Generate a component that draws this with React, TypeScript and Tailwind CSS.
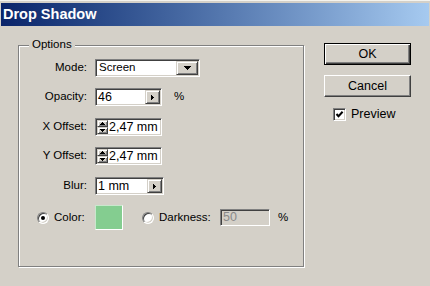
import React from "react";

const sunken =
  "border border-t-[#808080] border-l-[#808080] border-r-white border-b-white shadow-[inset_1px_1px_0_#404040,inset_-1px_-1px_0_#d4d0c8]";
const raisedSmall =
  "bg-[#d4d0c8] border border-t-[#d4d0c8] border-l-[#d4d0c8] border-r-[#404040] border-b-[#404040] shadow-[inset_1px_1px_0_#fff,inset_-1px_-1px_0_#808080]";

function DownTri() {
  return (
    <svg width="7" height="4" viewBox="0 0 7 4" shapeRendering="crispEdges">
      <polygon points="0,0 7,0 3.5,4" fill="#000" />
    </svg>
  );
}
function RightTri() {
  return (
    <svg width="3" height="5" viewBox="0 0 3 5" shapeRendering="crispEdges">
      <polygon points="0,0 3,2.5 0,5" fill="#000" />
    </svg>
  );
}
function UpSmall() {
  return (
    <svg width="5" height="3" viewBox="0 0 5 3" shapeRendering="crispEdges">
      <polygon points="2.5,0 5,3 0,3" fill="#000" />
    </svg>
  );
}
function DownSmall() {
  return (
    <svg width="5" height="3" viewBox="0 0 5 3" shapeRendering="crispEdges">
      <polygon points="0,0 5,0 2.5,3" fill="#000" />
    </svg>
  );
}

function Label({ children }: { children: React.ReactNode }) {
  return <div className="w-[68px] text-right leading-none">{children}</div>;
}

function SpinField({ value }: { value: string }) {
  return (
    <div className={`${sunken} ml-[8px] w-[67px] h-[18px] p-[1px] bg-white flex`}>
      <div className="w-[11px] h-full flex flex-col">
        <div className={`${raisedSmall} h-[7px] flex items-center justify-center`}>
          <UpSmall />
        </div>
        <div className={`${raisedSmall} h-[7px] flex items-center justify-center`}>
          <DownSmall />
        </div>
      </div>
      <div className="flex-1 pl-[1px] flex items-center text-[12.5px] leading-none">{value}</div>
    </div>
  );
}

function Radio({ checked }: { checked?: boolean }) {
  return (
    <div className="w-[12px] h-[12px] rounded-full border border-t-[#808080] border-l-[#808080] border-r-white border-b-white bg-white shadow-[inset_1px_1px_0_#404040,inset_-1px_-1px_0_#d4d0c8] flex items-center justify-center">
      {checked && <div className="w-[4px] h-[4px] rounded-full bg-black" />}
    </div>
  );
}

export default function App() {
  return (
    <div className="w-[430px] h-[286px] bg-[#d4d0c8] border-t border-t-[#f4f3ee] font-['Liberation_Sans',Arial,sans-serif] text-[11.5px] text-black overflow-hidden">
      <div className="mt-[2px] mx-[1px] h-[23px] bg-linear-to-r from-[#0a246a] to-[#a6caf0] flex items-center pl-[2px]">
        <span className="text-white font-bold text-[14.5px] leading-none">Drop Shadow</span>
      </div>

      <div className="flex items-start">
        {/* Options group */}
        <div className="relative ml-[18px] mt-[19px] w-[286px] h-[222px] border border-[#808080] shadow-[1px_1px_0_#fff,inset_1px_1px_0_#fff]">
          <span className="absolute -top-[7px] left-[10px] px-[3px] bg-[#d4d0c8] leading-none">Options</span>

          <div className="flex flex-col pt-[13px]">
            {/* Mode */}
            <div className="flex items-center h-[18px]">
              <Label>Mode:</Label>
              <div className={`${sunken} ml-[8px] w-[105px] h-[18px] p-[1px] bg-white flex`}>
                <div className="flex-1 pl-[2px] flex items-center leading-none">Screen</div>
                <div className={`${raisedSmall} w-[22px] h-full flex items-center justify-center`}>
                  <DownTri />
                </div>
              </div>
            </div>

            {/* Opacity */}
            <div className="flex items-center h-[18px] mt-[11px]">
              <Label>Opacity:</Label>
              <div className={`${sunken} ml-[8px] w-[67px] h-[18px] p-[1px] bg-white flex`}>
                <div className="flex-1 pl-[1px] flex items-center text-[12.5px] leading-none">46</div>
                <div className={`${raisedSmall} w-[15px] h-full flex items-center justify-center`}>
                  <RightTri />
                </div>
              </div>
              <span className="ml-[12px] leading-none">%</span>
            </div>

            {/* X Offset */}
            <div className="flex items-center h-[18px] mt-[12px]">
              <Label>X Offset:</Label>
              <SpinField value="2,47 mm" />
            </div>

            {/* Y Offset */}
            <div className="flex items-center h-[18px] mt-[11px]">
              <Label>Y Offset:</Label>
              <SpinField value="2,47 mm" />
            </div>

            {/* Blur */}
            <div className="flex items-center h-[18px] mt-[12px]">
              <Label>Blur:</Label>
              <div className={`${sunken} ml-[8px] w-[69px] h-[18px] p-[1px] bg-white flex`}>
                <div className="flex-1 pl-[1px] flex items-center text-[12.5px] leading-none">1 mm</div>
                <div className={`${raisedSmall} w-[15px] h-full flex items-center justify-center`}>
                  <RightTri />
                </div>
              </div>
            </div>

            {/* Color / Darkness */}
            <div className="flex items-center h-[25px] mt-[10px]">
              <div className="w-[68px] flex items-center pl-[18px]">
                <Radio checked />
                <span className="ml-[5px] leading-none">Color:</span>
              </div>
              <div className="ml-[8px] w-[28px] h-[25px] bg-[#84cd90] border border-t-[#c8e8cc] border-l-[#c8e8cc] border-r-white border-b-white" />
              <div className="ml-[19px]">
                <Radio />
              </div>
              <span className="ml-[5px] w-[61px] leading-none">Darkness:</span>
              <div className={`${sunken} w-[50px] h-[17px] bg-[#d4d0c8] flex items-center pl-[2px] text-[12.5px] text-[#8a8a8a] leading-none`}>
                50
              </div>
              <span className="ml-[8px] leading-none">%</span>
            </div>
          </div>
        </div>

        {/* Buttons */}
        <div className="ml-[20px] mt-[17px] w-[87px] flex flex-col">
          <div className="h-[22px] border border-black bg-[#d4d0c8] shadow-[inset_1px_1px_0_#fff,inset_-1px_-1px_0_#404040,inset_-2px_-2px_0_#808080] flex items-center justify-center text-[12.5px] leading-none">
            OK
          </div>
          <div className="mt-[10px] h-[22px] border border-t-white border-l-white border-r-[#404040] border-b-[#404040] bg-[#d4d0c8] shadow-[inset_-1px_-1px_0_#808080] flex items-center justify-center text-[12.5px] leading-none">
            Cancel
          </div>
          <div className="mt-[11px] ml-[9px] flex items-center">
            <div className={`${sunken} w-[13px] h-[13px] bg-white flex items-center justify-center`}>
              <svg width="9" height="9" viewBox="0 0 9 9">
                <path d="M1.5 4 L3.5 6.2 L7.6 1.8" stroke="#000" strokeWidth="2" fill="none" />
              </svg>
            </div>
            <span className="ml-[5px] text-[12.5px] leading-none">Preview</span>
          </div>
        </div>
      </div>
    </div>
  );
}
